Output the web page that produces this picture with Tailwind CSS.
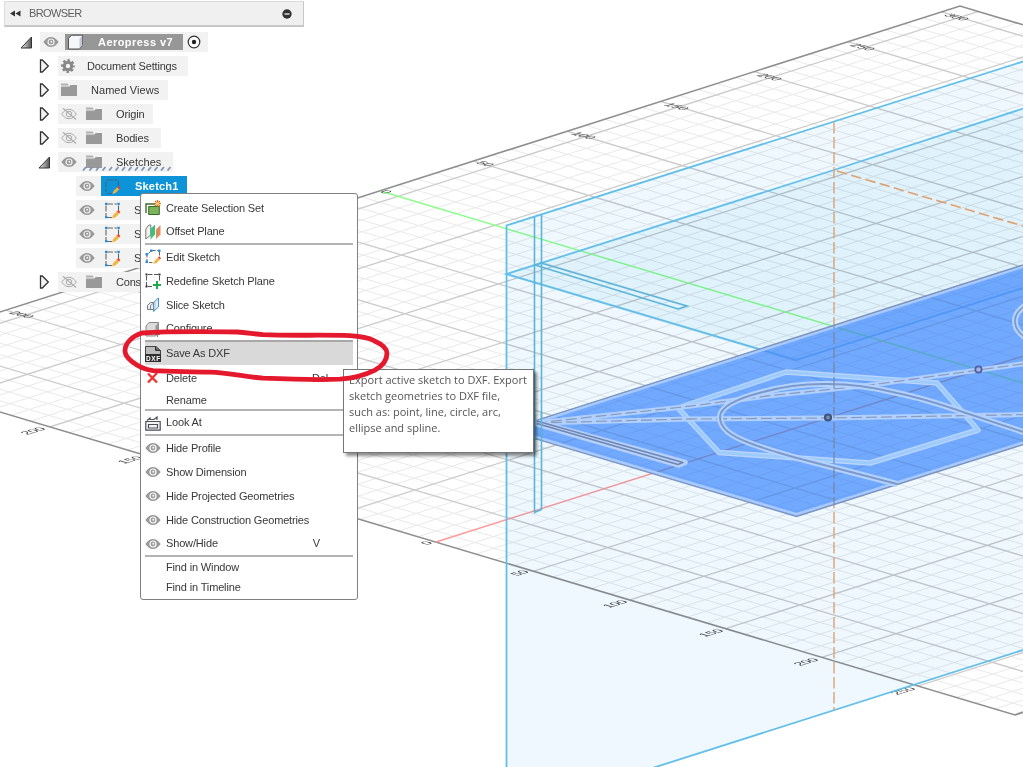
<!DOCTYPE html>
<html lang="en">
<head>
<meta charset="utf-8">
<title>Aeropress v7</title>
<script src="https://cdn.jsdelivr.net/npm/@tailwindcss/browser@4"></script>
</head>
<body class="relative h-[767px] w-[1023px] overflow-hidden bg-white font-['Liberation_Sans',sans-serif] text-[11px] text-[#383838]">

<!-- Shared icons -->
<svg class="absolute" width="0" height="0">
  <defs>
    <symbol id="eye" viewBox="0 0 16 12"><path d="M.3 6C3 2.300 5.500 1 8 1s5 1.300 7.700 5C13 9.700 10.500 11 8 11S3 9.700.3 6z" fill="#999"/><circle cx="8" cy="6" r="3" fill="none" stroke="#f2f2f2" stroke-width="1.200"/><circle cx="8.300" cy="5.700" r="1" fill="#f2f2f2"/></symbol>
    <symbol id="eyeoff" viewBox="0 0 16 12"><path d="M.7 6C3 2.600 5.500 1.300 8 1.300s5 1.300 7.300 4.700C13 9.400 10.500 10.700 8 10.700S3 9.400.7 6z" fill="none" stroke="#aaa"/><circle cx="8" cy="6" r="2.800" fill="none" stroke="#aaa"/><path d="M2 .3l13 11.200" stroke="#aaa" stroke-width="1.100"/></symbol>
    <symbol id="folder" viewBox="0 0 16 14"><path d="M0 .5h6.500L8 2.500H0z" fill="#b0b0b0"/><path d="M0 3.500h8.500l1-1.500H16v11H0z" fill="#999"/></symbol>
    <symbol id="arrow" viewBox="0 0 11 14"><path d="M1.500 1h1.800L9.300 7l-6 6H1.500z" fill="#f4f4f4" stroke="#333" stroke-width="1.300"/></symbol>
    <symbol id="open" viewBox="0 0 13 13"><path d="M11.500 1v11H1z" fill="url(#tri)" stroke="#333" stroke-width="1"/></symbol>
    <linearGradient id="tri"><stop offset="0" stop-color="#eee"/><stop offset="1" stop-color="#555"/></linearGradient>
    <symbol id="sketch" viewBox="0 0 17 17"><path d="M3 2h10.500M2 3.500v11M14.500 3.500V9M3 15.500h5" stroke="#666" stroke-width="1.100" fill="none" stroke-dasharray="6 1.500"/><path d="M1 .7h2.300v2.300H1zM13.500.7h2.300v2.300h-2.300zM1 14h2.300v2.300H1z" fill="#2a8fd8"/><path d="M8.500 16l1-3 4-4 2 2-4 4z" fill="#f3b541" stroke="#f3b541" stroke-width=".6"/><path d="M13 9.300l1.300-1.300 2 2L15 11.300z" fill="#e63c3c"/></symbol>
    <symbol id="meye" viewBox="0 0 16 12"><path d="M.3 6C3 2.300 5.500 1 8 1s5 1.300 7.700 5C13 9.700 10.500 11 8 11S3 9.700.3 6z" fill="#999"/><circle cx="8" cy="6" r="3" fill="none" stroke="#fff" stroke-width="1.200"/><circle cx="8.300" cy="5.700" r="1" fill="#fff"/></symbol>
  </defs>
</svg>

<!-- 3D canvas -->
<svg class="absolute inset-0" width="1023" height="767" viewBox="0 0 1023 767" fill="none">
  <clipPath id="gridClip"><path d="M-162 363.600L960 6l1177 351L1015 715z"/></clipPath>
  <g clip-path="url(#gridClip)">
    <path id="minor" stroke="#e9e9e9" stroke-width="1"/>
    <path id="major" stroke="#cbcbcb" stroke-width="1.300"/>
  </g>
  <path d="M-162 363.600L960 6l1177 351L1015 715z" stroke="#8f8f8f" stroke-width="1.600"/>
  <path d="M382 191.500L1100 406.100" stroke="#8bff8b" stroke-width="1.400"/>
  <path d="M436 542L979 370l121-38" stroke="#ff9898" stroke-width="1.400"/>
  <g font-size="12.500" fill="#444">
    <text transform="matrix(.95 .26 -.9 .26 379 192)">0</text>
    <text transform="matrix(.95 .26 -.9 .26 475 163)">50</text>
    <text transform="matrix(.95 .26 -.9 .26 570 134)">100</text>
    <text transform="matrix(.95 .26 -.9 .26 663 105)">150</text>
    <text transform="matrix(.95 .26 -.9 .26 756 75.500)">200</text>
    <text transform="matrix(.95 .26 -.9 .26 849 45.500)">250</text>
    <text transform="matrix(.95 .26 -.9 .26 943 15.500)">300</text>
    <text transform="matrix(.95 .26 -.9 .26 8 313)">200</text>
    <text transform="matrix(.95 -.28 .9 .26 427 545)">0</text>
    <text transform="matrix(.95 -.28 .9 .26 517 576)">50</text>
    <text transform="matrix(.95 -.28 .9 .26 609 608)">100</text>
    <text transform="matrix(.95 -.28 .9 .26 705 637)">150</text>
    <text transform="matrix(.95 -.28 .9 .26 800 666)">200</text>
    <text transform="matrix(.95 -.28 .9 .26 897 695)">250</text>
    <text transform="matrix(.95 -.28 .9 .26 27 435)">200</text>
    <text transform="matrix(.95 -.28 .9 .26 124 464)">150</text>
  </g>

  <!-- construction planes -->
  <path class="mix-blend-multiply" d="M506.500 225.500L1023 61.500V650L655 767H506.500z" fill="#eff8fe"/>
  <path class="mix-blend-multiply" d="M506.500 274L834 170l189-61.500V288l-227 72z" fill="#eff9fd"/>
  <g stroke="#62bfe9" stroke-width="1.800">
    <path d="M1030 59.300L506.500 225.500V770M640 772l400-127.400"/>
    <path d="M1030 106.300L834 170 506.500 274 796 360l234-74.200"/>
    <path d="M534.500 217v295.500l7-3V214.700M541 263l146 43-9 3-143-44z" stroke="#5ab4d8" stroke-width="1.600"/>
  </g>
  <path d="M834 122v588" stroke="#dba67c" stroke-width="1.500" stroke-dasharray="11.500 3.500"/>
  <path d="M837 171l186 55" stroke="#dfa070" stroke-width="1.600" stroke-dasharray="10.500 4.300"/>

  <!-- selected sketch profile -->
  <path class="mix-blend-multiply" d="M506 430L1030 262.500V442.500L796.500 516.500z" fill="#77adff"/>
  <path d="M506 430L1030 262.500V442.500L796.500 516.500z" fill="#71aaff" fill-opacity=".5"/>
  <path d="M1030 264.500L512 430l284.500 84.300L1030 440.500" stroke="#a9caff" stroke-width="2.500"/>
  <path d="M1030 262.700L506 430l290.500 86.500L1030 442.500" stroke="#7f94ba" stroke-width="1.300"/>
  <g stroke-linejoin="round">
    <path d="M678 408l108-36 151 11 41 47-108 33-151-10.500z" stroke="#b9d6ff" stroke-width="5.500"/>
    <path d="M678 408l108-36 151 11 41 47-108 33-151-10.500z" stroke="#9ecbfb" stroke-width="3"/>
    <path d="M536 423L690 419l138-1 200-3.500M536 423L683 407l84-11 100-10.500L979 370l50-7" stroke="#b0d0ff" stroke-width="5"/>
    <path d="M536 423L690 419l138-1 200-3.500M536 423L683 407l84-11 100-10.500L979 370l50-7" stroke="#8b9dc0" stroke-width="1.300" stroke-dasharray="11 4"/>
    <path d="M1028 433.500L963 412c-26-9-46-15-66-19-24-6-48-9.500-74-9-24 0-42 3-60 8-28 7-43 15-43 25 0 12 12 19 27 25 17 7 33 11 50 16l100 26" stroke="#b4d2ff" stroke-width="6"/>
    <path d="M1028 433.500L963 412c-26-9-46-15-66-19-24-6-48-9.500-74-9-24 0-42 3-60 8-28 7-43 15-43 25 0 12 12 19 27 25 17 7 33 11 50 16l100 26" stroke="#7b9acb" stroke-width="2"/>
    <path d="M1028 304c-9 5-13 10-13 17s4 13 13 18" stroke="#b4d2ff" stroke-width="6"/>
    <path d="M1028 304c-9 5-13 10-13 17s4 13 13 18" stroke="#7b9acb" stroke-width="1.700"/>
    <path d="M537 422l148 40.500-6 2.500-142-41z" stroke="#b4d0fb" stroke-width="5.500"/>
    <path d="M537 421l146 41.500-5 2-141-41" stroke="#7086b2" stroke-width="1.400"/>
  </g>
  <path d="M534.500 414v26M541.500 412v30" stroke="#5ab4d8" stroke-width="1.500"/>
  <path d="M834 122v588" clip-path="url(#profileClip)" stroke="#7a8fb8" stroke-width="1.300" stroke-dasharray="11.500 3.500"/>
  <clipPath id="profileClip"><path d="M506 430L1030 262.500V442.500L796.500 516.500z"/></clipPath>
  <circle cx="828" cy="417.500" r="3" fill="#7890b4" stroke="#41527c" stroke-width="2.200"/>
  <circle cx="978.500" cy="369.500" r="3.200" fill="#a9b4e0" stroke="#4f5fa8" stroke-width="1.800"/>
</svg>

<!-- Browser panel -->
<aside class="relative flex w-[304px] flex-col">
  <header class="ml-1 mt-px flex h-[26px] w-[300px] items-center border border-b-2 border-[#c8c8c8] border-t-[#dcdcdc] border-l-[#dcdcdc] bg-[#f0f0f0] pl-[5px] pr-[11px] text-[#606060]">
    <svg width="11" height="7" viewBox="0 0 11 7" fill="#333"><path d="M5 .5v6L0 3.500zM10.500.5v6l-5-3z"/></svg>
    <span class="ml-[8px] flex-1 tracking-[-0.6px]">BROWSER</span>
    <svg width="10" height="10" viewBox="0 0 10 10"><circle cx="5" cy="5" r="4.700" fill="#333"/><path d="M2.500 5h5" stroke="#ddd" stroke-width="1.500"/></svg>
  </header>
  <div class="mt-[5px] flex flex-col gap-1">
    <div class="flex h-5 items-center pl-[20px]">
      <svg width="13" height="13"><use href="#open"/></svg>
      <div class="ml-[7px] flex h-5 w-[168px] items-center bg-[#f2f2f2] pl-[3px]">
        <svg width="16" height="12"><use href="#eye"/></svg>
        <div class="ml-1.5 flex h-4 w-[118px] items-center bg-[#979797] pl-[2px] font-bold text-white">
          <svg width="17" height="16" viewBox="0 0 17 16"><path d="M1.500 4.500L4.500 1.200h11v10L12.500 15h-11z" fill="#f5f6f8" stroke="#555" stroke-width="1"/><path d="M12.500 4.700L15.200 1.700v9.500L12.500 14.500z" fill="#c3c7d0"/></svg>
          <span class="ml-[14px] tracking-[0.45px]">Aeropress v7</span>
        </div>
        <svg class="ml-[4px]" width="14" height="14" viewBox="0 0 14 14"><circle cx="7" cy="7" r="5.800" fill="#fff" stroke="#333" stroke-width="1.200"/><circle cx="7" cy="7" r="2.200" fill="#222"/></svg>
      </div>
    </div>
    <div class="flex h-5 items-center pl-[39px]">
      <svg width="11" height="14"><use href="#arrow"/></svg>
      <div class="ml-2 flex h-5 w-[130px] items-center bg-[#f2f2f2] pl-[3px]">
        <svg width="14" height="14" viewBox="0 0 14 14"><circle cx="7" cy="7" r="3.700" fill="none" stroke="#888" stroke-width="3"/><circle cx="7" cy="7" r="5.700" fill="none" stroke="#888" stroke-width="2.400" stroke-dasharray="2.500 1.977" stroke-dashoffset="1.250"/></svg>
        <span class="ml-[12px] tracking-[-0.18px]">Document Settings</span>
      </div>
    </div>
    <div class="flex h-5 items-center pl-[39px]">
      <svg width="11" height="14"><use href="#arrow"/></svg>
      <div class="ml-2 flex h-5 w-[110px] items-center bg-[#f2f2f2] pl-[3px]">
        <svg width="16" height="14"><use href="#folder"/></svg>
        <span class="ml-[14px] tracking-[0.05px]">Named Views</span>
      </div>
    </div>
    <div class="flex h-5 items-center pl-[39px]">
      <svg width="11" height="14"><use href="#arrow"/></svg>
      <div class="ml-2 flex h-5 w-[95px] items-center bg-[#f2f2f2] pl-[3px]">
        <svg width="16" height="12"><use href="#eyeoff"/></svg>
        <svg class="ml-[9px]" width="16" height="14"><use href="#folder"/></svg>
        <span class="ml-[14px] tracking-[-0.15px]">Origin</span>
      </div>
    </div>
    <div class="flex h-5 items-center pl-[39px]">
      <svg width="11" height="14"><use href="#arrow"/></svg>
      <div class="ml-2 flex h-5 w-[103px] items-center bg-[#f2f2f2] pl-[3px]">
        <svg width="16" height="12"><use href="#eyeoff"/></svg>
        <svg class="ml-[9px]" width="16" height="14"><use href="#folder"/></svg>
        <span class="ml-[14px] tracking-[-0.15px]">Bodies</span>
      </div>
    </div>
    <div class="flex h-5 items-center pl-[38px]">
      <svg width="13" height="13"><use href="#open"/></svg>
      <div class="relative ml-[7px] flex h-5 w-[115px] items-center bg-[#f2f2f2] pl-[3px]">
        <svg width="16" height="12"><use href="#eye"/></svg>
        <svg class="ml-[9px]" width="16" height="14"><use href="#folder"/></svg>
        <span class="ml-[14px]">Sketches</span>
        <svg class="absolute left-[24px] top-[14px]" width="92" height="5" viewBox="0 0 92 5"><path d="M1 4.500l3-3.500m3.500 3.500l3-3.500m3.500 3.500l3-3.500m3.500 3.500l3-3.500m3.500 3.500l3-3.500m3.500 3.500l3-3.500m3.500 3.500l3-3.500m3.500 3.500l3-3.500m3.500 3.500l3-3.500m3.500 3.500l3-3.500m3.500 3.500l3-3.500m3.500 3.500l3-3.500m3.500 3.500l3-3.500m3.500 3.500l3-3.500" stroke="#7d93b5" stroke-width="1.800"/></svg>
      </div>
    </div>
    <div class="ml-[76px] flex h-5 w-[111px] items-center bg-[#f2f2f2] pl-[3px]">
      <svg width="16" height="12"><use href="#eye"/></svg>
      <div class="ml-[6px] flex h-5 w-[86px] items-center bg-[#0d93d8] pl-[3px] font-bold text-white">
        <svg width="17" height="17" viewBox="0 0 17 17"><path d="M3 2h10.500M2 3.500v11M14.500 3.500V9M3 15.500h5" stroke="#3d6680" stroke-width="1.100" fill="none" stroke-dasharray="6 1.500"/><path d="M8.500 16l1-3 4-4 2 2-4 4z" fill="#f3b541"/><path d="M13 9.300l1.300-1.300 2 2L15 11.300z" fill="#e63c3c"/></svg>
        <span class="ml-[14px] tracking-[0.2px]">Sketch1</span>
      </div>
    </div>
    <div class="ml-[76px] flex h-5 w-[66px] items-center bg-[#f2f2f2] pl-[3px]">
      <svg width="16" height="12"><use href="#eye"/></svg><svg class="ml-[9px]" width="17" height="17"><use href="#sketch"/></svg><span class="ml-[13px]">S</span>
    </div>
    <div class="ml-[76px] flex h-5 w-[66px] items-center bg-[#f2f2f2] pl-[3px]">
      <svg width="16" height="12"><use href="#eye"/></svg><svg class="ml-[9px]" width="17" height="17"><use href="#sketch"/></svg><span class="ml-[13px]">S</span>
    </div>
    <div class="ml-[76px] flex h-5 w-[66px] items-center bg-[#f2f2f2] pl-[3px]">
      <svg width="16" height="12"><use href="#eye"/></svg><svg class="ml-[9px]" width="17" height="17"><use href="#sketch"/></svg><span class="ml-[13px]">S</span>
    </div>
    <div class="flex h-5 items-center pl-[39px]">
      <svg width="11" height="14"><use href="#arrow"/></svg>
      <div class="ml-2 flex h-5 w-[84px] items-center bg-[#f2f2f2] pl-[3px]">
        <svg width="16" height="12"><use href="#eyeoff"/></svg>
        <svg class="ml-[9px]" width="16" height="14"><use href="#folder"/></svg>
        <span class="ml-[14px] tracking-[-0.2px]">Cons</span>
      </div>
    </div>
  </div>
</aside>

<!-- Context menu -->
<nav class="absolute left-[140px] top-[193px] flex h-[407px] w-[218px] flex-col rounded-[3px] border border-[#808080] bg-white px-1 pt-[2px] tracking-[-0.15px]">
  <div class="flex h-6 items-center gap-[5px]"><svg width="16" height="16" viewBox="0 0 16 16"><path d="M1 13V4h9" fill="none" stroke="#3d6b2d" stroke-width="1.400"/><path d="M3.700 6.500h10.600v8H3.700z" fill="#7fb35a" stroke="#2f6b25"/><path d="M12.500 0v7M9 3.500h7M10 1l5 5M15 1l-5 5" stroke="#dd6b10" stroke-width="1.100"/><circle cx="12.500" cy="3.500" r="1.600" fill="#ffd27a"/></svg>Create Selection Set</div>
  <div class="flex h-[23px] items-center gap-[5px]"><svg width="16" height="16" viewBox="0 0 16 16"><path d="M.8 15V5l3-4h2v10z" fill="#f2f2f2" stroke="#777"/><path d="M5.500 5L10 .5v10L5.500 15.500z" fill="#3fbf78"/><path d="M11 5.500L15.500 1v9.500L11 15z" fill="#de8a5b"/></svg>Offset Plane</div>
  <hr class="h-[2px] border-0 bg-[#b4b4b4]">
  <div class="flex h-6 items-center gap-[5px]"><svg width="16" height="16" viewBox="0 0 16 16"><path d="M2 5v8M4 13.500h5M3.500 4.500l3-3h7M14.500 3v4" fill="none" stroke="#666" stroke-dasharray="3.500 1.500"/><path d="M.5 4h2.500v2.500H.5zM5 .5h2.500V3H5zM13 .5h2.500V3H13zM.5 11.500h2.500V14H.5z" fill="#2a8fd8"/><path d="M8.500 15l1-3 3.500-3.500 2 2-3.500 3.500z" fill="#f3b541"/><path d="M13 8.500l1.300-1.300 1.700 2-1 1.300z" fill="#e63c3c"/></svg>Edit Sketch</div>
  <div class="flex h-6 items-center gap-[5px]"><svg width="16" height="16" viewBox="0 0 16 16"><path d="M3 1.500h11M1.500 3v10M14.500 3v5M3 13.500h4" fill="none" stroke="#555" stroke-dasharray="4.500 1.500"/><path d="M.5.5h2v2h-2zM13.500.5h2v2h-2zM.5 12.500h2v2h-2z" fill="#333"/><path d="M12 8v8M8 12h8" stroke="#1cab4b" stroke-width="2"/></svg>Redefine Sketch Plane</div>
  <div class="flex h-6 items-center gap-[5px]"><svg width="16" height="16" viewBox="0 0 16 16"><path d="M2.500 12.500V8.500l3-3h4.500v7z" fill="#eee" stroke="#777"/><path d="M5.500 12.500v-4l2.500-2" fill="none" stroke="#888"/><path d="M8.500 5.500L13.500 1v9l-5 4.500z" fill="#cfe4f7" fill-opacity=".7" stroke="#4a90cc"/></svg>Slice Sketch</div>
  <div class="flex h-[23px] items-center gap-[5px]"><svg width="16" height="16" viewBox="0 0 16 16"><path d="M1 15V5l3-3.500h9.500V12l-3 3z" fill="#dcdcdc" stroke="#888"/><path d="M10.500 5l3-3.500V12l-3 3z" fill="#999"/><path d="M10 13.500h5M12.500 11v5" stroke="#777"/></svg>Configure</div>
  <hr class="h-[2px] border-0 bg-[#a8a8a8]">
  <div class="flex h-6 items-center gap-[5px] border-b border-white bg-[#d9d9d9]"><svg width="16" height="16" viewBox="0 0 16 16"><path d="M.5.500H11l4.500 4V9H.5z" fill="#bbb" stroke="#444"/><path d="M10.500.5v4h5" fill="#666" stroke="#333"/><path d="M0 8h16v8H0z" fill="#2e2e2e"/><text x="1" y="14.800" font-size="6.500" font-weight="bold" fill="#fff" textLength="14">DXF</text></svg>Save As DXF</div>
  <div class="flex h-6 items-center gap-[5px]"><svg width="16" height="16" viewBox="0 0 16 16"><path d="M3 3.500l9 9M12 3L3 12.500" stroke="#f0372f" stroke-width="2.400"/></svg><span class="flex-1">Delete</span><span class="mr-[25px]">Del</span></div>
  <div class="flex h-[21px] -mb-[2px] items-center pl-[21px]">Rename</div>
  <hr class="h-[2px] shrink-0 border-0 bg-[#b4b4b4]">
  <div class="flex h-[23px] items-center gap-[5px]"><svg width="16" height="16" viewBox="0 0 16 16"><path d="M.8 6.500h14.400v8.700H.8zM3.500 9.500h9v3.500h-9z" fill="#f4f4f4" stroke="#4a4e58" stroke-width="1.200"/><path d="M2 5.500L5 3v1.500h4L12 2v3" fill="none" stroke="#4a4e58" stroke-width="1.200"/></svg>Look At</div>
  <hr class="h-[2px] border-0 bg-[#b4b4b4]">
  <div class="flex h-6 items-center gap-[5px]"><svg width="16" height="12"><use href="#meye"/></svg>Hide Profile</div>
  <div class="flex h-6 items-center gap-[5px]"><svg width="16" height="12"><use href="#meye"/></svg>Show Dimension</div>
  <div class="flex h-6 items-center gap-[5px]"><svg width="16" height="12"><use href="#meye"/></svg>Hide Projected Geometries</div>
  <div class="flex h-6 items-center gap-[5px]"><svg width="16" height="12"><use href="#meye"/></svg>Hide Construction Geometries</div>
  <div class="flex h-[23px] items-center gap-[5px]"><svg width="16" height="12"><use href="#meye"/></svg><span class="flex-1">Show/Hide</span><span class="mr-[33px]">V</span></div>
  <hr class="h-[2px] border-0 bg-[#b4b4b4]">
  <div class="flex h-5 items-center pl-[21px]">Find in Window</div>
  <div class="flex h-5 items-center pl-[21px]">Find in Timeline</div>
</nav>

<!-- Tooltip -->
<div class="absolute left-[343px] top-[369px] h-[84px] w-[191px] whitespace-nowrap border border-[#767676] bg-white pl-[5px] pt-[2px] font-['Open_Sans',sans-serif] text-[11px] leading-4 text-[#555]  shadow-[3px_3px_3px_rgba(0,0,0,0.45)]">
  Export active sketch to DXF. Export<br>sketch geometries to DXF file,<br>such as: point, line, circle, arc,<br>ellipse and spline.
</div>

<!-- Hand-drawn highlight -->
<svg class="absolute inset-0" width="1023" height="767" viewBox="0 0 1023 767" fill="none">
  <path d="M142 333c30-2 65-1.500 95-1 10 .5 16 2 26 2.700 30 1.300 60-.2 87 1 12 .8 18 2 24 5 8 3.500 13 7 13 12.500 0 8-5 13-12 17-10 5-20 8-35 9-26 1-52 0-77-1-18-1.500-35-5.500-53-6-19-.8-38-.5-57-1.500-8-1-16-5-21-9-5-4-7-7-7-11 0-8 8-15 17-17.700z" stroke="#e4192e" stroke-width="4.800" stroke-linejoin="round"/>
</svg>

<script>
  // Build the ground grid: two families of parallel lines, a major line at every fifth.
  let minor = '', major = '';
  for (let i = -31; i <= 29; i++) {
    const c = 77.4 + i * 11.55, d = `M-200 ${c - 59.7}L1100 ${c + 328.35}`;
    if (i === 0) continue;
    if (i % 5) minor += d; else major += d;
  }
  for (let i = -31; i <= 30; i++) {
    const c = 682 + i * (i < 0 ? 11.96 : 11.86), d = `M-200 ${c + 63.74}L1100 ${c - 350.57}`;
    if (i === 0) continue;
    if (i % 5) minor += d; else major += d;
  }
  document.getElementById('minor').setAttribute('d', minor);
  document.getElementById('major').setAttribute('d', major);
</script>
</body>
</html>
